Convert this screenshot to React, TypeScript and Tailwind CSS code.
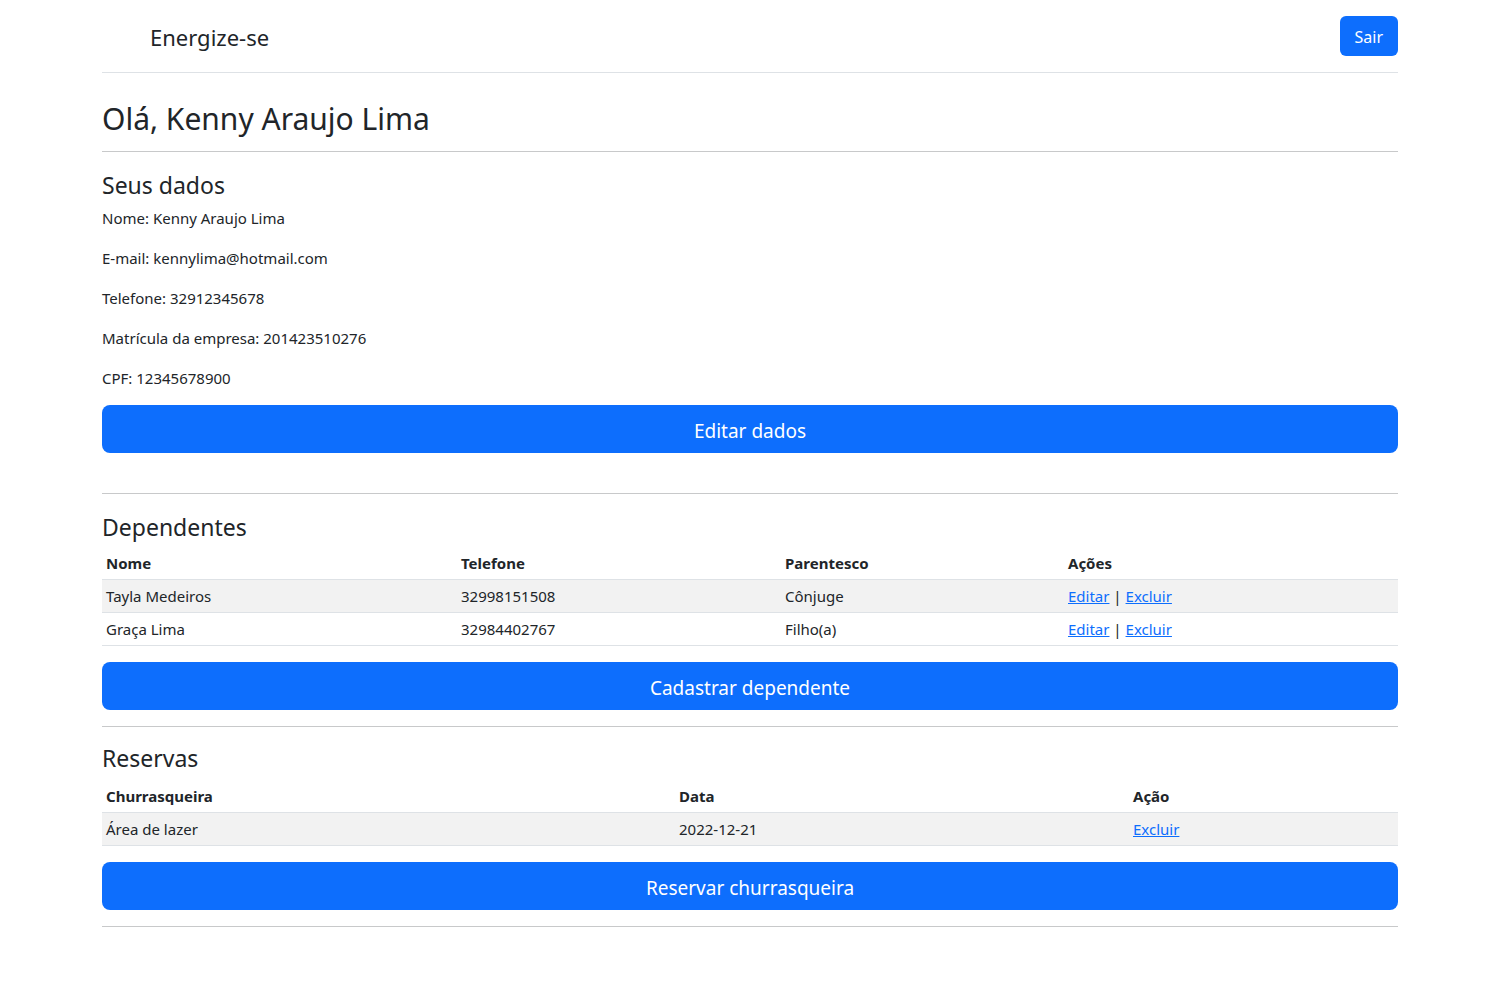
import * as React from 'react';

const dependentes = [
    { nome: 'Tayla Medeiros', telefone: '32998151508', parentesco: 'Cônjuge' },
    { nome: 'Graça Lima', telefone: '32984402767', parentesco: 'Filho(a)' },
];

const reservas = [{ churrasqueira: 'Área de lazer', data: '2022-12-21' }];

const Hr = ({ className = '' }: { className?: string }) => (
    <div className={'border-t border-[#c8c9ca] ' + className} />
);

const BigButton = ({ children, className = '' }: { children: React.ReactNode; className?: string }) => (
    <button className={'w-full h-12 pt-[5px] rounded-lg bg-[#0d6efd] text-white text-[19px] ' + className}>
        {children}
    </button>
);

const Link = ({ children }: { children: React.ReactNode }) => (
    <a href="#" className="text-[#0d6efd] underline">
        {children}
    </a>
);

export default function App() {
    return (
        <div className="bg-white text-[#212529] font-['Noto_Sans',sans-serif] min-h-[1000px]">
            <div className="mx-auto w-[1296px]">
                {/* navbar */}
                <nav className="h-[73px] flex items-center justify-between border-b border-[#dee2e6]">
                    <span className="ml-12 pt-[3px] text-[22px]">Energize-se</span>
                    <button className="h-10 px-[15px] pt-[2px] rounded-md bg-[#0d6efd] text-white text-[16px]">Sair</button>
                </nav>

                <h2 className="mt-[27px] text-[30px] leading-[38px]">Olá, Kenny Araujo Lima</h2>
                <Hr className="mt-[13px]" />

                {/* seus dados */}
                <h4 className="mt-[19px] text-[23px] leading-[29px]">Seus dados</h4>
                <div className="mt-[6px] text-[15px] leading-6 flex flex-col gap-4">
                    <p>Nome: Kenny Araujo Lima</p>
                    <p>E-mail: kennylima@hotmail.com</p>
                    <p>Telefone: 32912345678</p>
                    <p>Matrícula da empresa: 201423510276</p>
                    <p>CPF: 12345678900</p>
                </div>
                <BigButton className="mt-[15px]">Editar dados</BigButton>
                <Hr className="mt-10" />

                {/* dependentes */}
                <h4 className="mt-[19px] text-[23px] leading-[29px]">Dependentes</h4>
                <table className="mt-[5px] w-full text-[15px] leading-6 text-left border-collapse">
                    <thead>
                        <tr className="border-b border-[#dee2e6]">
                            <th className="w-[355px] px-1 py-1 font-bold">Nome</th>
                            <th className="w-[324px] px-1 py-1 font-bold">Telefone</th>
                            <th className="w-[283px] px-1 py-1 font-bold">Parentesco</th>
                            <th className="px-1 py-1 font-bold">Ações</th>
                        </tr>
                    </thead>
                    <tbody>
                        {dependentes.map((d, i) => (
                            <tr key={i} className={'border-b border-[#dee2e6] ' + (i % 2 === 0 ? 'bg-[#f2f2f2]' : '')}>
                                <td className="px-1 py-1">{d.nome}</td>
                                <td className="px-1 py-1">{d.telefone}</td>
                                <td className="px-1 py-1">{d.parentesco}</td>
                                <td className="px-1 py-1">
                                    <Link>Editar</Link> | <Link>Excluir</Link>
                                </td>
                            </tr>
                        ))}
                    </tbody>
                </table>
                <BigButton className="mt-4">Cadastrar dependente</BigButton>
                <Hr className="mt-4" />

                {/* reservas */}
                <h4 className="mt-[17px] text-[23px] leading-[29px]">Reservas</h4>
                <table className="mt-[7px] w-full text-[15px] leading-6 text-left border-collapse">
                    <thead>
                        <tr className="border-b border-[#dee2e6]">
                            <th className="w-[573px] px-1 py-1 font-bold">Churrasqueira</th>
                            <th className="w-[454px] px-1 py-1 font-bold">Data</th>
                            <th className="px-1 py-1 font-bold">Ação</th>
                        </tr>
                    </thead>
                    <tbody>
                        {reservas.map((r, i) => (
                            <tr key={i} className="border-b border-[#dee2e6] bg-[#f2f2f2]">
                                <td className="px-1 py-1">{r.churrasqueira}</td>
                                <td className="px-1 py-1">{r.data}</td>
                                <td className="px-1 py-1">
                                    <Link>Excluir</Link>
                                </td>
                            </tr>
                        ))}
                    </tbody>
                </table>
                <BigButton className="mt-4">Reservar churrasqueira</BigButton>
                <Hr className="mt-4" />
            </div>
        </div>
    );
}
